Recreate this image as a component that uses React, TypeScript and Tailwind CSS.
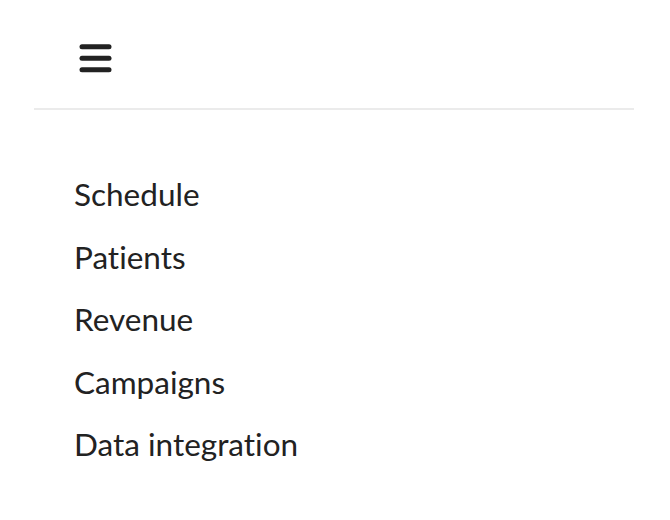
export default function App() {
  const items = ["Schedule", "Patients", "Revenue", "Campaigns", "Data integration"];
  return (
    <div className="w-[670px] h-[520px] bg-white" style={{ fontFamily: "Lato, 'Noto Sans', sans-serif" }}>
      <div className="mx-[34px] mr-[36px]">
        <div className="h-[108px] pt-[44px] pl-[45px]">
          <svg width="33" height="29" viewBox="0 0 33 29" className="block">
            <rect x="0.5" y="0.3" width="32" height="5" rx="2.5" fill="#222222" />
            <rect x="0.5" y="11.7" width="32" height="5" rx="2.5" fill="#222222" />
            <rect x="0.5" y="23.3" width="32" height="5" rx="2.5" fill="#222222" />
          </svg>
        </div>
        <div className="h-[2px] bg-[#ebebeb]" />
        <ul className="pt-[53px] pl-[40px]">
          {items.map((t) => (
            <li key={t} className="text-[31.5px] leading-[62.6px] text-[#222222] [font-variant-ligatures:none]">
              {t}
            </li>
          ))}
        </ul>
      </div>
    </div>
  );
}
